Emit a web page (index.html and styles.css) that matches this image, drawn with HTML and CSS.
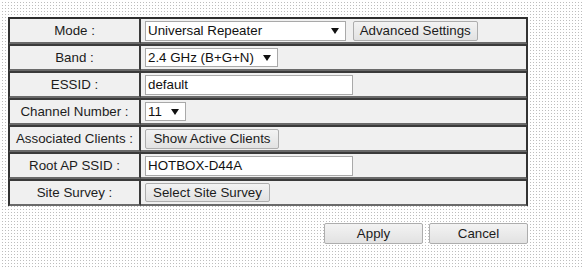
FILE: index.html
```html
<!DOCTYPE html>
<html lang="en">
<head>
  <meta charset="UTF-8">
  <title>Wireless Settings</title>
  <link rel="stylesheet" href="styles.css">
</head>
<body>

<div class="page">
  <table class="settings">
    <tr>
      <td class="label">Mode :</td>
      <td class="value">
        <span class="sel sel-mode"><select><option>Universal Repeater</option></select></span>
        <button class="btn btn-adv">Advanced Settings</button>
      </td>
    </tr>
    <tr>
      <td class="label">Band :</td>
      <td class="value">
        <span class="sel sel-band"><select><option>2.4 GHz (B+G+N)</option></select></span>
      </td>
    </tr>
    <tr>
      <td class="label">ESSID :</td>
      <td class="value"><input class="txt" type="text" value="default"></td>
    </tr>
    <tr>
      <td class="label">Channel Number :</td>
      <td class="value">
        <span class="sel sel-chan"><select><option>11</option></select></span>
      </td>
    </tr>
    <tr>
      <td class="label">Associated Clients :</td>
      <td class="value"><button class="btn btn-clients">Show Active Clients</button></td>
    </tr>
    <tr>
      <td class="label">Root AP SSID :</td>
      <td class="value"><input class="txt" type="text" value="HOTBOX-D44A"></td>
    </tr>
    <tr>
      <td class="label">Site Survey :</td>
      <td class="value"><button class="btn btn-survey">Select Site Survey</button></td>
    </tr>
  </table>

  <div class="actions">
    <button class="btn btn-wide">Apply</button>
    <button class="btn btn-wide">Cancel</button>
  </div>
</div>

</body>
</html>
```

FILE: styles.css
```css
body {
  margin: 0;
  font-family: "Liberation Sans", Arial, sans-serif;
  font-size: 13.33px;
  color: #1c1c1c;
  background-color: #fff;
  background-image:
    linear-gradient(90deg, #fff 2px, transparent 2px),
    linear-gradient(#fff 2px, #bdbdbd 2px);
  background-size: 3px 3px;
}

.page {
  padding: 17px 0 0 8px;
  width: 520px;
}

.settings {
  width: 520px;
  border-collapse: separate;
  border-spacing: 0;
  border-left: 1px solid #333;
  border-right: 1px solid #333;
}

.settings td {
  height: 23px;
  padding: 0;
  background: #f0f0f0;
  border-top: 2px solid #3a3a3a;
  border-bottom: 2px solid #6a6a6a;
}

.settings tr:first-child td {
  border-top-color: #2e2e2e;
}

.label {
  width: 129px;
  text-align: center;
  white-space: nowrap;
  border-left: 1px solid #333;
  border-right: 2px solid #3a3a3a;
}

.value {
  padding-left: 4px !important;
  border-right: 1px solid #333;
}

.value > * {
  vertical-align: middle;
}

.sel {
  position: relative;
  display: inline-block;
  height: 19px;
  background: #fff;
  border: 1px solid #a9a9a9;
  box-sizing: border-box;
}

.sel select {
  appearance: none;
  -webkit-appearance: none;
  border: 0;
  background: transparent;
  font: inherit;
  color: #111;
  height: 17px;
  width: 100%;
  padding: 0 0 0 2px;
  outline: none;
}

.sel::after {
  content: "";
  position: absolute;
  right: 6px;
  top: 6px;
  border-left: 4px solid transparent;
  border-right: 4px solid transparent;
  border-top: 6px solid #111;
  pointer-events: none;
}

.sel-mode { width: 201px; height: 20px; }
.sel-band { width: 133px; }
.sel-chan { width: 41px; }

.txt {
  width: 208px;
  height: 20px;
  box-sizing: border-box;
  border: 1px solid #a9a9a9;
  background: #fff;
  font: inherit;
  color: #111;
  padding: 0 0 0 2px;
  margin: 0;
}

.btn {
  height: 20px;
  box-sizing: border-box;
  padding: 0;
  margin: 0;
  white-space: nowrap;
  font: inherit;
  color: #1c1c1c;
  border: 1px solid #adadad;
  border-radius: 2px;
  background: linear-gradient(#f3f3f3, #e2e2e2);
}

.btn-adv { margin-left: 3px; width: 125px; }
.btn-clients { width: 134px; }
.btn-survey { width: 125px; height: 19px; }

.actions {
  display: flex;
  justify-content: flex-end;
  gap: 6px;
  margin-top: 17px;
}

.btn-wide {
  width: 99px;
  height: 21px;
}
```
